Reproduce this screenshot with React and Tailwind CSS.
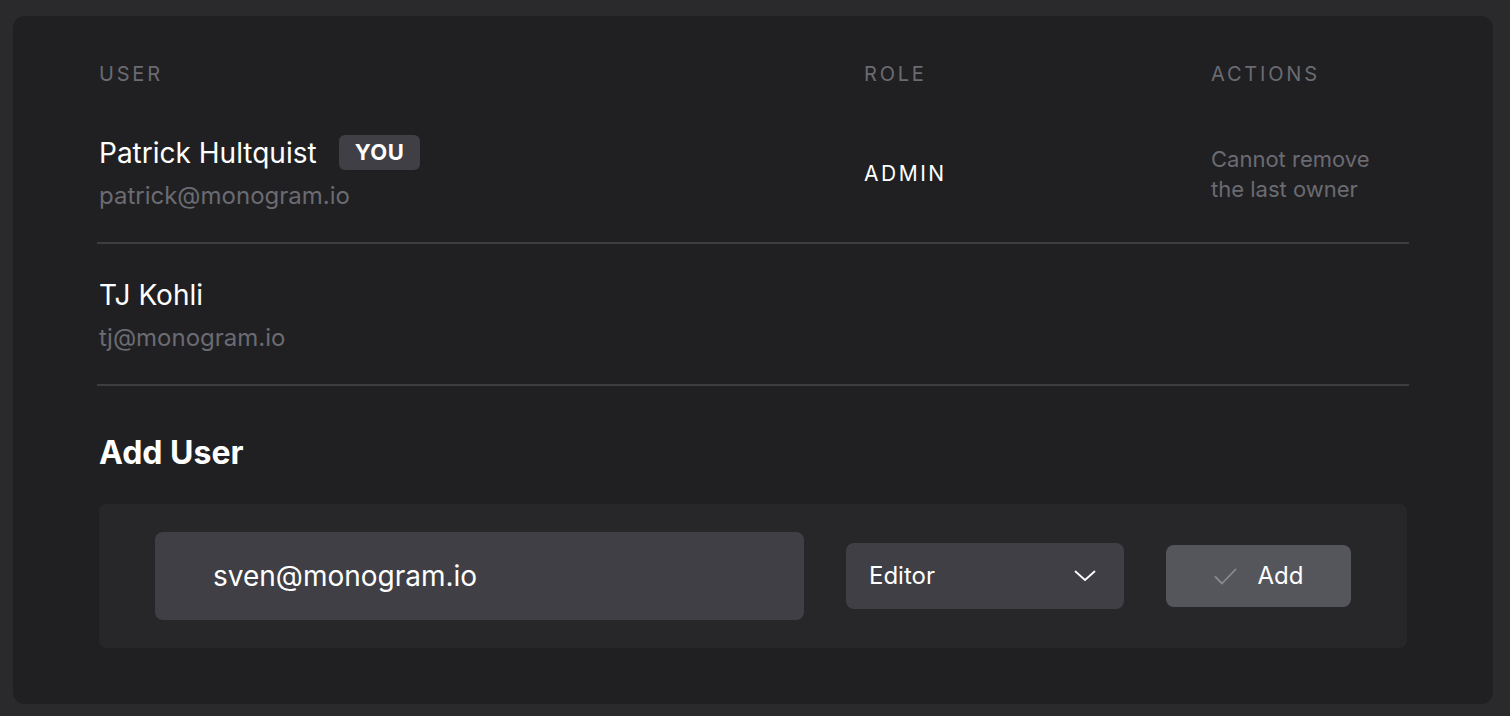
import React from 'react';

const users = [
  { name: 'Patrick Hultquist', email: 'patrick@monogram.io', you: true, role: 'ADMIN', action: 'Cannot remove the last owner' },
  { name: 'TJ Kohli', email: 'tj@monogram.io', you: false, role: '', action: '' },
];

const App = () => {
  return (
    <div className="min-h-screen bg-[#2a2a2d] pl-[13px] pr-[17px] pt-4 pb-3" style={{ fontFamily: 'Inter, "Noto Sans", sans-serif' }}>
      <div className="bg-[#202023] rounded-xl px-[84px] pt-[44px] pb-[56px]">
        <div className="grid grid-cols-[765px_347px_1fr] text-[20px] leading-7 tracking-[0.14em] text-[#6b6b72] px-[2px] pb-[14px]">
          <div>USER</div>
          <div>ROLE</div>
          <div>ACTIONS</div>
        </div>

        {users.map((user) => (
          <div key={user.email} className="grid grid-cols-[765px_347px_1fr] items-center border-b-2 border-[#3c3c41] px-[2px] pt-[33px] pb-[30px]">
            <div>
              <div className="flex items-center gap-[22px] min-h-[35px]">
                <span className="text-[28px] leading-[34px] text-white">{user.name}</span>
                {user.you && (
                  <span className="bg-[#3f3f45] rounded-md px-[16px] h-[35px] flex items-center text-[22px] font-bold tracking-wide text-white">YOU</span>
                )}
              </div>
              <div className="text-[24px] leading-8 mt-[10px] text-[#6b6b72]">{user.email}</div>
            </div>
            <div className="text-[21px] tracking-[0.12em] text-white">{user.role}</div>
            <div className="text-[22px] leading-[30px] text-[#6b6b72] w-[180px]">{user.action}</div>
          </div>
        ))}

        <h2 className="text-[32px] font-bold text-white mt-[47px] px-[2px] leading-10">Add User</h2>

        <div className="mt-[31px] mx-[2px] bg-[#27272a] rounded-lg px-[56px] py-[28px] flex items-center">
          <div className="w-[649px] h-[88px] bg-[#3f3f45] rounded-lg flex items-center pl-[58px] text-[28px] text-white">
            sven@monogram.io
          </div>
          <div className="ml-[42px] w-[278px] h-[66px] bg-[#3f3f45] rounded-lg flex items-center justify-between pl-[23px] pr-[28px] text-[24px] text-white">
            <span>Editor</span>
            <svg width="22" height="12" viewBox="0 0 22 12" fill="none" stroke="currentColor" strokeWidth="1.8" strokeLinecap="round" strokeLinejoin="round">
              <path d="M1.5 1.5 L11 10 L20.5 1.5" />
            </svg>
          </div>
          <button className="ml-[42px] w-[185px] h-[62px] bg-[#55555c] rounded-lg flex items-center justify-center gap-[21px] text-[24px] text-white">
            <svg width="23" height="17" viewBox="0 0 23 17" fill="none" stroke="#8a8a90" strokeWidth="1.8" strokeLinecap="round" strokeLinejoin="round">
              <path d="M1.5 9 L8 15.5 L21.5 1.5" />
            </svg>
            <span>Add</span>
          </button>
        </div>
      </div>
    </div>
  );
};

export default App;
